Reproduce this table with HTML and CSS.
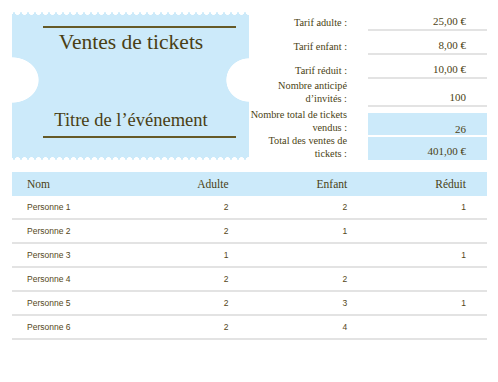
FILE: index.html
```html
<!DOCTYPE html>
<html lang="fr">
<head>
<meta charset="utf-8">
<title>Ventes de tickets</title>
<link rel="stylesheet" href="styles.css">
</head>
<body>
<div class="page">
  <section class="top">
    <div class="ticket">
      <div class="ticket-frame">
        <h1 class="title">Ventes de tickets</h1>
        <h2 class="event">Titre de l’événement</h2>
      </div>
    </div>
    <div class="info">
      <div class="row r1"><div class="label">Tarif adulte :</div><div class="value">25,00 €</div></div>
      <div class="row r1"><div class="label">Tarif enfant :</div><div class="value">8,00 €</div></div>
      <div class="row r1"><div class="label">Tarif réduit :</div><div class="value">10,00 €</div></div>
      <div class="row r4"><div class="label">Nombre anticipé<br>d’invités :</div><div class="value">100</div></div>
      <div class="row r5"><div class="label">Nombre total de tickets<br>vendus :</div><div class="value blue">26</div></div>
      <div class="row r6"><div class="label">Total des ventes de<br>tickets :</div><div class="value blue">401,00 €</div></div>
    </div>
  </section>
  <table class="guests">
    <thead>
      <tr><th class="name">Nom</th><th>Adulte</th><th>Enfant</th><th>Réduit</th></tr>
    </thead>
    <tbody>
      <tr><td class="name">Personne 1</td><td>2</td><td>2</td><td>1</td></tr>
      <tr><td class="name">Personne 2</td><td>2</td><td>1</td><td></td></tr>
      <tr><td class="name">Personne 3</td><td>1</td><td></td><td>1</td></tr>
      <tr><td class="name">Personne 4</td><td>2</td><td>2</td><td></td></tr>
      <tr><td class="name">Personne 5</td><td>2</td><td>3</td><td>1</td></tr>
      <tr><td class="name">Personne 6</td><td>2</td><td>4</td><td></td></tr>
    </tbody>
  </table>
</div>
</body>
</html>
```
FILE: styles.css
```css
html, body {
  margin: 0;
  padding: 0;
  background: #ffffff;
}
.page {
  padding: 7px 11px 0 12px;
  width: 475px;
  color: #4a3f14;
  font-family: "Liberation Serif", "Times New Roman", serif;
}
.top {
  display: flex;
  align-items: flex-start;
  height: 165px;
}
.ticket {
  width: 237px;
  height: 148px;
  margin-top: 5px;
  box-sizing: border-box;
  padding: 14px 13px 0 31px;
  background:
    radial-gradient(circle at 50% 0, #fff 2.6px, rgba(255,255,255,0) 3.2px) 2px 0 / 7px 7px repeat-x,
    radial-gradient(circle at 50% 100%, #fff 2.6px, rgba(255,255,255,0) 3.2px) 2px 100% / 7px 7px repeat-x,
    radial-gradient(27px 23px at 0 68px, #fff 97%, rgba(255,255,255,0) 100%) no-repeat,
    radial-gradient(23px 22px at 100% 68px, #fff 97%, rgba(255,255,255,0) 100%) no-repeat,
    #cceafa;
}
.ticket-frame {
  height: 112px;
  box-sizing: border-box;
  border-top: 2px solid #655a28;
  border-bottom: 2px solid #655a28;
  padding: 1px 17px 5px 0;
  display: flex;
  flex-direction: column;
  justify-content: space-between;
  text-align: center;
}
.title {
  margin: 0;
  font-size: 21.5px;
  line-height: 26px;
  font-weight: normal;
}
.event {
  margin: 0;
  font-size: 18.5px;
  line-height: 22px;
  font-weight: normal;
}
.info {
  width: 238px;
  display: flex;
  flex-direction: column;
  font-size: 11px;
  line-height: 12px;
}
.row {
  display: flex;
  align-items: flex-end;
}
.r1 { height: 24px; }
.r4 { height: 28px; }
.r5 { height: 28px; }
.r6 { height: 24px; margin-top: 1px; }
.label {
  width: 119px;
  box-sizing: border-box;
  padding: 0 21px 2px 0;
  text-align: right;
  white-space: nowrap;
  font-size: 10.3px;
  line-height: 12.3px;
}
.value {
  width: 119px;
  box-sizing: border-box;
  padding: 0 21px 2px 0;
  text-align: right;
  border-bottom: 2px solid #e3e3e3;
}
.r5 .label { padding-bottom: 1px; }
.r6 .label { padding-bottom: 0; }
.value.blue {
  border-bottom: none;
  background: #cceafa;
  padding-bottom: 3px;
}
.r5 .value { height: 22px; box-sizing: border-box; padding-top: 10px; }
.r6 .value { height: 23px; box-sizing: border-box; padding-top: 8px; }
.guests {
  width: 475px;
  border-collapse: collapse;
  table-layout: fixed;
}
.guests th {
  background: #cceafa;
  height: 24px;
  padding: 0 21px 0 0;
  text-align: right;
  font-weight: normal;
  font-size: 11.5px;
  font-family: "Liberation Serif", "Times New Roman", serif;
}
.guests td {
  height: 22px;
  padding: 0 21px 0 0;
  text-align: right;
  border-bottom: 2px solid #e3e3e3;
  font-family: "Liberation Sans", Arial, sans-serif;
  font-size: 8.5px;
  color: #554719;
}
.guests .name {
  text-align: left;
  padding-left: 15px;
}
```
